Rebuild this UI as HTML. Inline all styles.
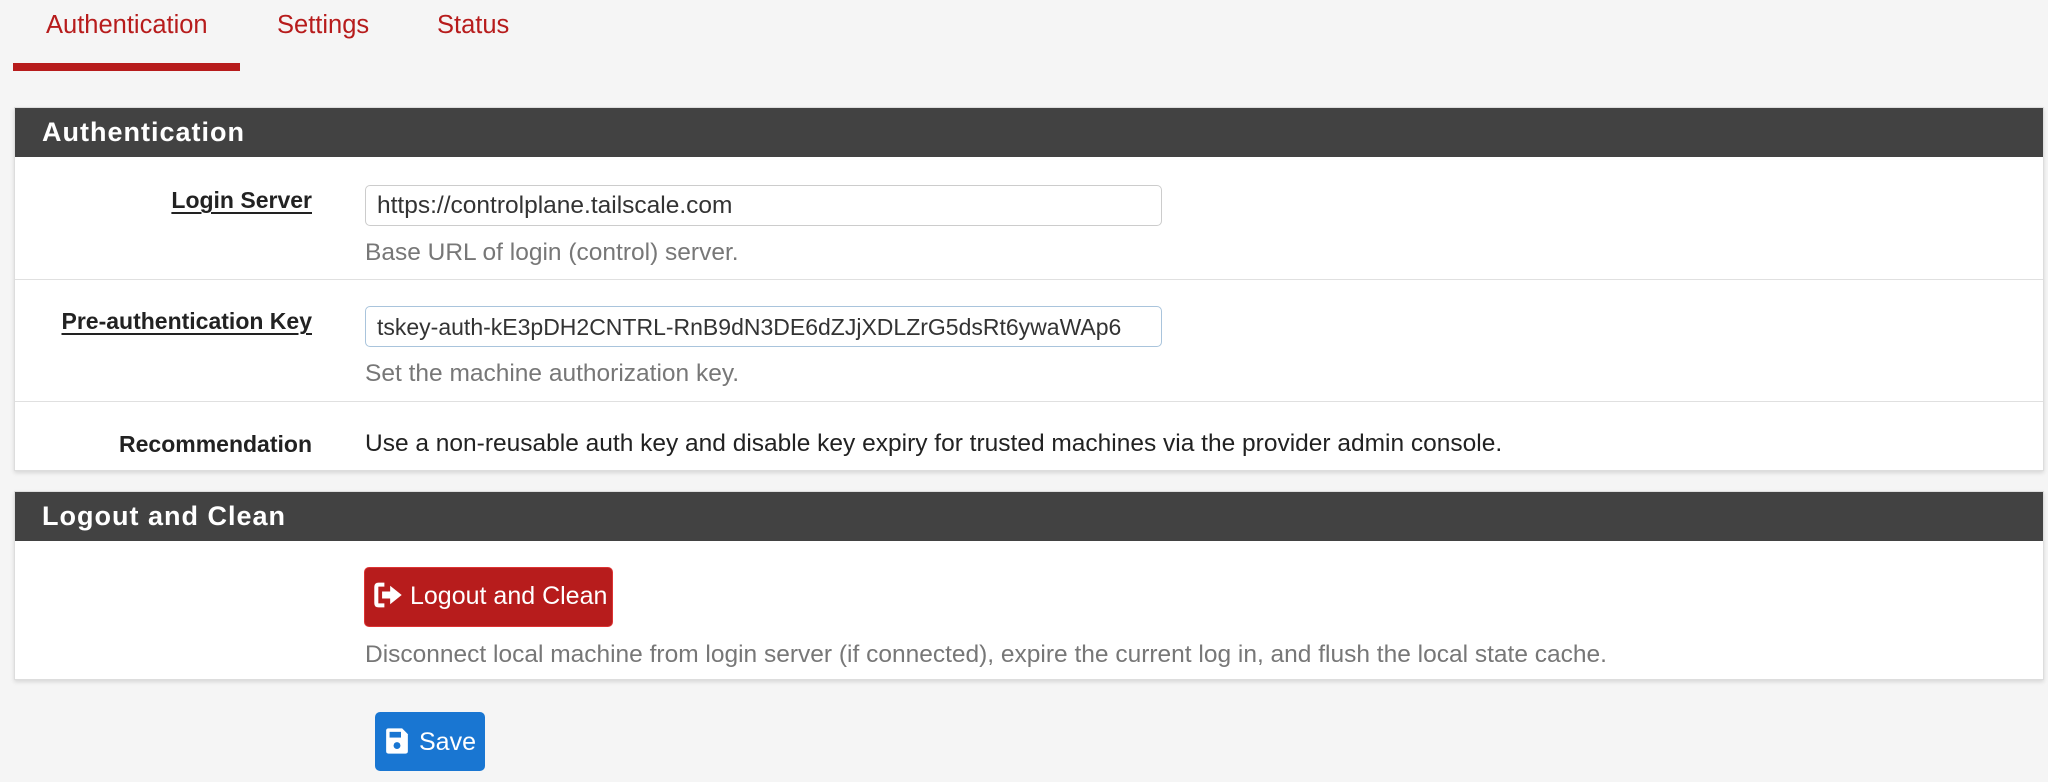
<!DOCTYPE html>
<html><head><meta charset="utf-8"><style>
*{box-sizing:border-box;margin:0;padding:0}
body{width:2048px;height:782px;background:#f5f5f5;font-family:"Liberation Sans",sans-serif;position:relative;overflow:hidden}
.a{position:absolute;white-space:nowrap}
.tab{color:#b71c1c;font-size:25.5px;top:11px}
.panel{position:absolute;left:14px;width:2030px;background:#fff;box-shadow:0 2px 4px rgba(0,0,0,.12);border:1px solid #ddd}
.hd{position:absolute;left:0;right:0;top:0;height:49px;background:#424242;color:#fff;font-weight:bold;font-size:27px;letter-spacing:1px;padding:9px 0 0 27px}
.lbl{font-weight:bold;font-size:23px;color:#222;text-align:right;width:400px}
.u{text-decoration:underline;text-decoration-thickness:2px;text-underline-offset:4px}
.inp{position:absolute;left:350px;width:797px;height:41px;border:1px solid #ccc;border-radius:5px;font-size:24.5px;color:#333;padding:6px 11px;background:#fff;white-space:nowrap;overflow:hidden}
.help{color:#777;font-size:24.5px}
.sep{position:absolute;left:0;right:0;height:1px;background:#e0e0e0}
</style></head><body>
<div class="a tab" style="left:46px">Authentication</div>
<div class="a tab" style="left:277px">Settings</div>
<div class="a tab" style="left:437px">Status</div>
<div class="a" style="left:13px;top:63px;width:227px;height:8px;background:#b71c1c"></div>

<div class="panel" style="top:107px;height:364px">
 <div class="hd">Authentication</div>
 <div class="a lbl" style="left:-103px;top:79px"><span class="u">Login Server</span></div>
 <div class="inp" style="top:77px">https://controlplane.tailscale.com</div>
 <div class="a help" style="left:350px;top:131px">Base URL of login (control) server.</div>
 <div class="sep" style="top:171px"></div>
 <div class="a lbl" style="left:-103px;top:200px"><span class="u">Pre-authentication Key</span></div>
 <div class="inp" style="top:198px;border-color:#a9c4dc;font-size:23px;padding-top:7px">tskey-auth-kE3pDH2CNTRL-RnB9dN3DE6dZJjXDLZrG5dsRt6ywaWAp6</div>
 <div class="a help" style="left:350px;top:252px">Set the machine authorization key.</div>
 <div class="sep" style="top:293px"></div>
 <div class="a lbl" style="left:-103px;top:323px">Recommendation</div>
 <div class="a" style="left:350px;top:322px;font-size:24.5px;color:#222">Use a non-reusable auth key and disable key expiry for trusted machines via the provider admin console.</div>
</div>

<div class="panel" style="top:491px;height:189px">
 <div class="hd">Logout and Clean</div>
 <div class="a" style="left:349px;top:75px;width:249px;height:60px;background:#b71c1c;border:1px solid #d33;border-radius:5px;color:#fff;font-size:25px;padding:14px 0 0 9px">
  <svg width="30" height="26" viewBox="0 0 26 22" style="vertical-align:-4px;margin-right:6px"><path d="M9 2H4Q2 2 2 4V18Q2 20 4 20H9" fill="none" stroke="#fff" stroke-width="3.5"/><path d="M7 8H14V3L24 11L14 19V14H7Z" fill="#fff"/></svg>Logout and Clean</div>
 <div class="a help" style="left:350px;top:149px">Disconnect local machine from login server (if connected), expire the current log in, and flush the local state cache.</div>
</div>

<div class="a" style="left:375px;top:712px;width:110px;height:59px;background:#1976d2;border-radius:5px;color:#fff;font-size:25px;padding:15px 0 0 10px">
 <svg width="24" height="28" viewBox="0 0 21 24" style="vertical-align:-5px;margin-right:10px"><path d="M1 3Q1 1 3 1H15L20 6V21Q20 23 18 23H3Q1 23 1 21Z" fill="#fff"/><rect x="4" y="4" width="10" height="5" fill="#1976d2"/><circle cx="10.5" cy="16" r="3" fill="#1976d2"/></svg>Save</div>
</body></html>
